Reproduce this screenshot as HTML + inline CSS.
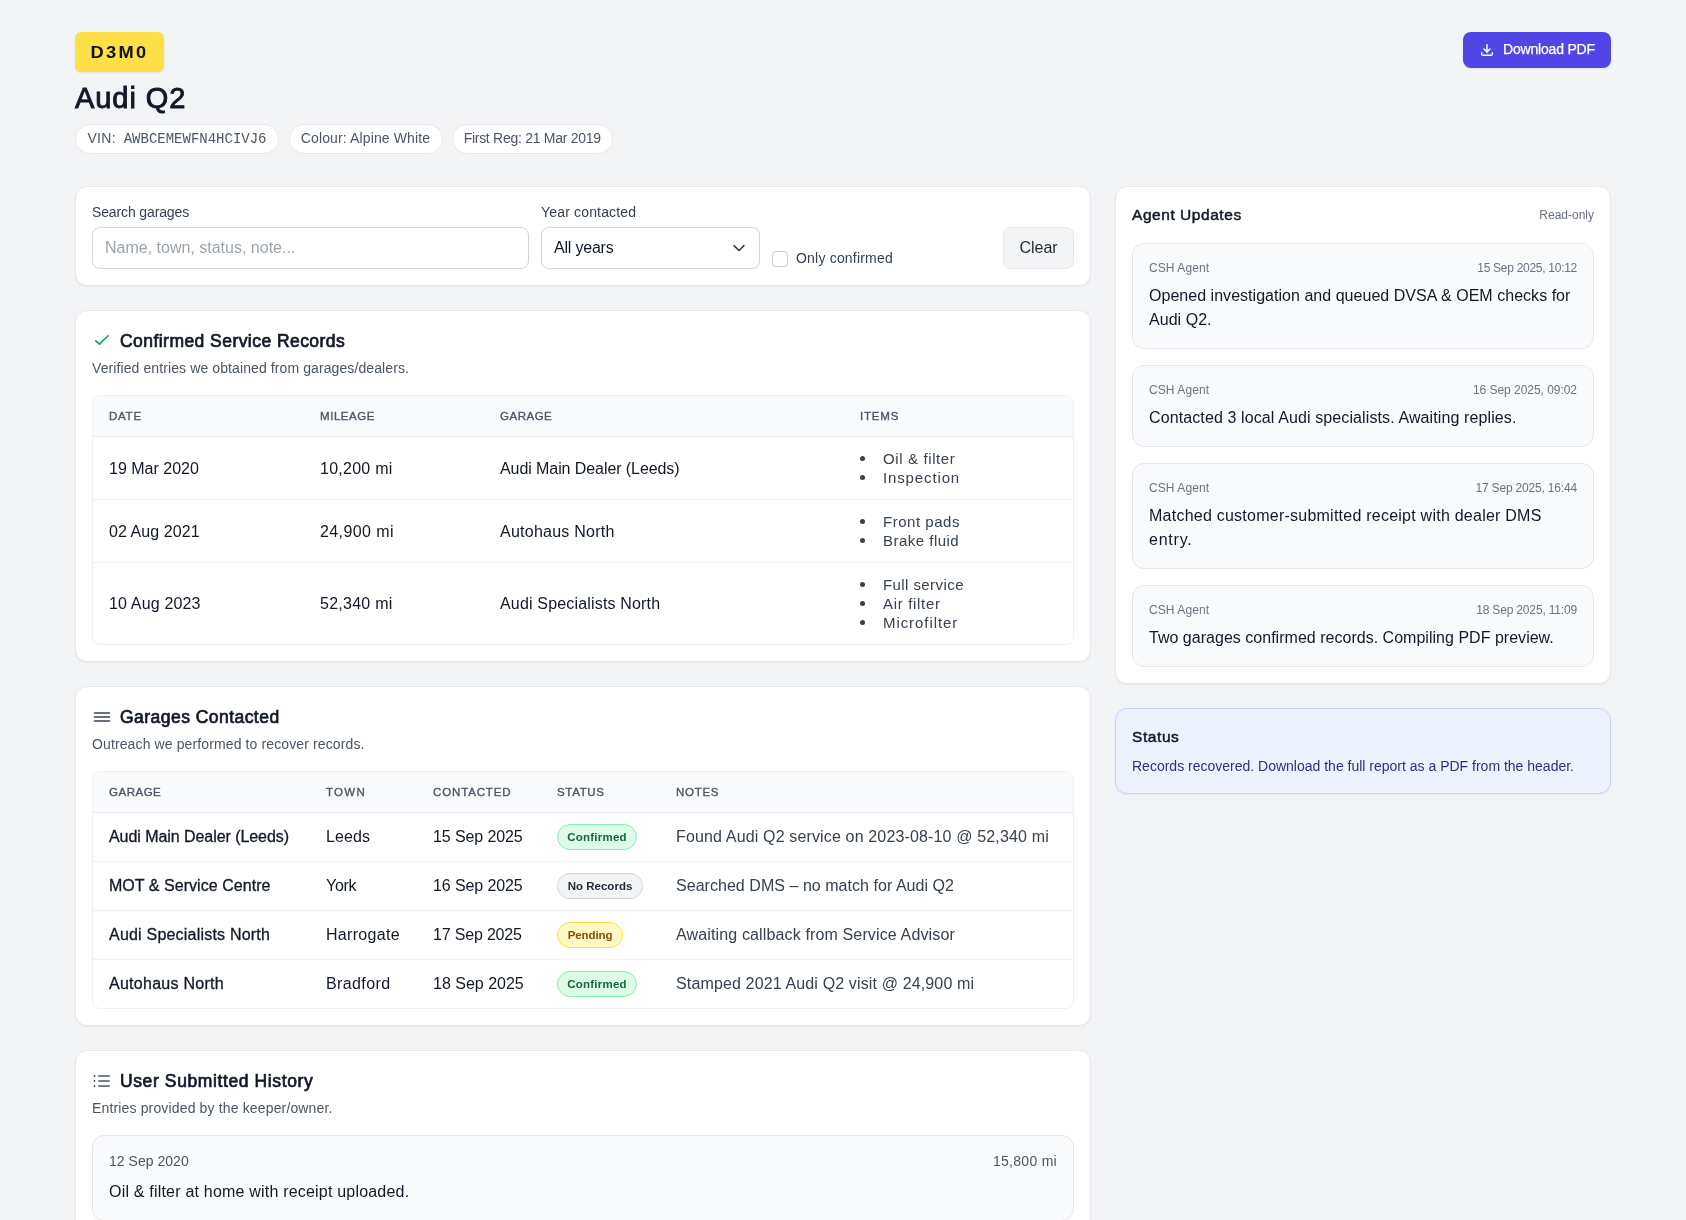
<!DOCTYPE html>
<html lang="en">
<head>
<meta charset="utf-8">
<title>Audi Q2 – Service History</title>
<style>
*{box-sizing:border-box;margin:0;padding:0}
html,body{width:1686px;height:1220px;overflow:hidden}
body{background:#f3f4f6;font-family:"Liberation Sans",sans-serif;color:#111827;font-size:16px;line-height:24px}
.t{white-space:nowrap}
.wrap{width:1536px;margin:0 auto;padding-top:32px;position:relative;will-change:transform}
.badge{display:block;height:40px;width:89px;background:#fde047;border-radius:6px;font-weight:700;font-size:16px;line-height:41px;text-align:center;color:#111;box-shadow:0 1px 2px rgba(0,0,0,.08)}
.badge .bt{display:inline-block;transform:scaleX(1.14);letter-spacing:2.1px;margin-right:-2px;position:relative;left:-1.200px}
h1{font-size:29px;line-height:36px;font-weight:400;-webkit-text-stroke:.9px #111827;margin-top:8px;color:#111827}
.pills{display:flex;margin-top:8px;height:30px}
.pill{height:30px;border:1px solid #e5e7eb;background:#fff;border-radius:15px;padding:4px 0;text-align:center;font-size:14px;line-height:20px;color:#4b5563;white-space:nowrap}
.p1{width:204px}.p2{width:154px;margin-left:9.500px}.p3{width:161.500px;margin-left:9px}
.pill .mono{font-family:"Liberation Mono",monospace;margin-left:4px}
.dl{position:absolute;right:0;top:32px;width:148px;height:36px;border-radius:8px;background:#4f46e5;color:#fff;font-size:14px;line-height:34px;padding-left:40px;box-shadow:0 1px 2px rgba(0,0,0,.08);-webkit-text-stroke:.25px #fff}
.dl svg{position:absolute;left:15.500px;top:10px}
.grid{display:grid;grid-template-columns:1016px 496px;gap:24px;margin-top:32px;align-items:start}
.card{background:#fff;border:1px solid #e5e7eb;border-radius:12px;padding:16px;box-shadow:0 1px 2px rgba(0,0,0,.05)}
.col>.card+.card{margin-top:24px}
.filter{display:grid;grid-template-columns:437px 219px 219px 71px;gap:12px;align-items:end;height:100px}
.lbl{display:block;font-size:14px;line-height:20px;color:#374151;margin-bottom:4px}
.inp{height:42px;border:1px solid #d1d5db;border-radius:8px;background:#fff;padding:8px 12px;font-size:16px;line-height:24px;position:relative}
.ph{color:#9ca3af}
.sel svg{position:absolute;right:13px;top:16px}
.f3{display:flex;align-items:center;gap:8px;height:20px;font-size:14px;line-height:20px;color:#374151}
.cb{width:16px;height:16px;border:1px solid #c9cdd4;border-radius:4px;background:#fff;display:inline-block}
.f4{height:42px;border:1px solid #e5e7eb;background:#f3f4f6;border-radius:8px;text-align:center;line-height:40px;font-size:16px;color:#1f2937}
h2{font-size:17.500px;line-height:28px;font-weight:400;-webkit-text-stroke:.7px #111827;color:#111827;position:relative;padding-left:28px}
h2 svg{position:absolute;left:0;top:4px}
.sub{font-size:14px;line-height:20px;color:#4b5563;margin-top:4px}
.tbl{margin-top:16px;border:1px solid #eef0f2;border-radius:8px;overflow:hidden}
.tr{display:grid;border-top:1px solid #f0f1f3;align-items:center;font-size:16px;line-height:24px;color:#111827}
.tr>div{padding:0 16px;white-space:nowrap}
.tr.th{border-top:0;background:#f9fafb;border-bottom:1px solid #e5e7eb;font-size:11.500px;line-height:16px;color:#4b5563;-webkit-text-stroke:.35px #4b5563;height:41px}
.th+.tr{border-top:0}
.t1 .tr{grid-template-columns:211px 180px 360px 229px}
.t2 .tr{grid-template-columns:217px 107px 124px 119px 413px}
ul{list-style:none;font-size:15px;line-height:19px;color:#374151;margin-left:-1px}
li{position:relative;padding-left:24px}
li:before{content:"";position:absolute;left:1px;top:7px;width:5px;height:5px;border-radius:50%;background:#374151}
.r2>div>.t{position:relative;top:1px}.r2{height:63px}.r3{height:82px}.th+.tr.r2{height:62px}
.t2 .tr:not(.th){height:49px}.t2 .th+.tr{height:48px !important}
.g{-webkit-text-stroke:.3px #111827}
.n{color:#374151}
.st{display:inline-block;height:26px;border-radius:13px;border:1px solid;padding:0;text-align:center;font-size:11.500px;line-height:24px;font-weight:700;vertical-align:middle}
.ok{background:#dcfce7;border-color:#86efac;color:#166534;width:80px}
.no{background:#f3f4f6;border-color:#d1d5db;color:#1f2937;width:86px}
.pe{background:#fef9c3;border-color:#fde047;color:#854d0e;width:66px}
.ent,.upd{border:1px solid #e5e7eb;background:#f9fafb;border-radius:12px;padding:16px}
.ent{margin-top:16px}
.row{display:flex;justify-content:space-between;color:#6b7280}
.ent .row{font-size:14px;line-height:20px;color:#4b5563}
.ent .msg{margin-top:8px}
.upd{margin-top:16px}
.upd .row{font-size:12px;line-height:16px}
.upd .msg{margin-top:8px;font-size:16px;line-height:24px;color:#111827;white-space:nowrap}
.auh{display:flex;justify-content:space-between;align-items:center;height:24px}
.auh .tt,#stt .tt{font-size:15.500px;line-height:24px;-webkit-text-stroke:.5px #111827;color:#111827}
.ro{font-size:12px;color:#6b7280}
#stt{background:#eef2ff;border-color:#c7d2fe}
#stt p{margin-top:8px;font-size:14px;line-height:20px;color:#312e81}
.lbl .t,.sub .t,.f3 .t,#stt p .t,.ent .row .t,.pill{position:relative;top:-1px}
.pill{top:0}.pill .t,.pill .mono{position:relative;top:-1px}
</style>
</head>
<body>
<div class="wrap">
  <div class="badge"><span class="bt">D3M0</span></div>
  <div class="dl"><svg width="16" height="16" viewBox="0 0 24 24" fill="none" stroke="#fff" stroke-width="2.2" stroke-linecap="round" stroke-linejoin="round"><path d="M12 4v11"/><path d="M7.500 10.500 12 15l4.500-4.500"/><path d="M4 16v2a2 2 0 0 0 2 2h12a2 2 0 0 0 2-2v-2"/></svg><span class="t" style="letter-spacing:-0.19px">Download PDF</span></div>
  <h1><span class="t" style="letter-spacing:0.93px">Audi Q2</span></h1>
  <div class="pills">
    <div class="pill p1"><span class="t" style="letter-spacing:0.27px">VIN:</span> <span class="mono">AWBCEMEWFN4HCIVJ6</span></div>
    <div class="pill p2"><span class="t" style="letter-spacing:0.13px">Colour: Alpine White</span></div>
    <div class="pill p3"><span class="t" style="letter-spacing:-0.27px">First Reg: 21 Mar 2019</span></div>
  </div>
  <div class="grid">
    <div class="col" id="left">
      <div class="card filter">
        <div class="f1"><label class="lbl"><span class="t" style="letter-spacing:-0.13px">Search garages</span></label><div class="inp"><span class="ph"><span class="t">Name, town, status, note...</span></span></div></div>
        <div class="f2"><label class="lbl"><span class="t" style="letter-spacing:0.17px">Year contacted</span></label><div class="inp sel"><span class="t" style="letter-spacing:-0.2px">All years</span><svg width="14" height="9" viewBox="0 0 14 9" fill="none" stroke="#374151" stroke-width="1.600" stroke-linecap="round" stroke-linejoin="round"><path d="M2.100 1.600 7 6.500l4.900-4.900"/></svg></div></div>
        <div class="f3"><span class="cb"></span><span class="t" style="letter-spacing:0.2px">Only confirmed</span></div>
        <div class="f4"><span class="t">Clear</span></div>
      </div>

      <div class="card sec" id="c2">
        <h2><svg width="20" height="20" viewBox="0 0 20 20" fill="none" stroke="#16a34a" stroke-width="1.600" stroke-linecap="round" stroke-linejoin="round"><path d="M3.800 9.800 7.500 13.100 16.100 4.700"/></svg><span class="t" style="letter-spacing:0.45px">Confirmed Service Records</span></h2>
        <p class="sub"><span class="t" style="letter-spacing:0.1px">Verified entries we obtained from garages/dealers.</span></p>
        <div class="tbl t1">
          <div class="tr th"><div><span class="t" style="letter-spacing:0.75px">DATE</span></div><div><span class="t" style="letter-spacing:0.56px">MILEAGE</span></div><div><span class="t" style="letter-spacing:0.51px">GARAGE</span></div><div><span class="t" style="letter-spacing:0.8px">ITEMS</span></div></div>
          <div class="tr r2"><div><span class="t">19 Mar 2020</span></div><div><span class="t" style="letter-spacing:0.26px">10,200 mi</span></div><div><span class="t" style="letter-spacing:-0.08px">Audi Main Dealer (Leeds)</span></div><div><ul><li><span class="t" style="letter-spacing:0.62px">Oil &amp; filter</span></li><li><span class="t" style="letter-spacing:0.87px">Inspection</span></li></ul></div></div>
          <div class="tr r2"><div><span class="t" style="letter-spacing:0.08px">02 Aug 2021</span></div><div><span class="t" style="letter-spacing:0.4px">24,900 mi</span></div><div><span class="t" style="letter-spacing:0.25px">Autohaus North</span></div><div><ul><li><span class="t" style="letter-spacing:0.52px">Front pads</span></li><li><span class="t" style="letter-spacing:0.48px">Brake fluid</span></li></ul></div></div>
          <div class="tr r3"><div><span class="t" style="letter-spacing:0.16px">10 Aug 2023</span></div><div><span class="t" style="letter-spacing:0.26px">52,340 mi</span></div><div><span class="t" style="letter-spacing:0.17px">Audi Specialists North</span></div><div><ul><li><span class="t" style="letter-spacing:0.42px">Full service</span></li><li><span class="t" style="letter-spacing:0.68px">Air filter</span></li><li><span class="t" style="letter-spacing:0.93px">Microfilter</span></li></ul></div></div>
        </div>
      </div>

      <div class="card sec" id="c3">
        <h2><svg width="20" height="20" viewBox="0 0 20 20" fill="none" stroke="#374151" stroke-width="1.600" stroke-linecap="round"><path d="M2.500 6h15M2.500 10h15M2.500 14h15"/></svg><span class="t" style="letter-spacing:0.46px">Garages Contacted</span></h2>
        <p class="sub"><span class="t" style="letter-spacing:0.12px">Outreach we performed to recover records.</span></p>
        <div class="tbl t2">
          <div class="tr th"><div><span class="t" style="letter-spacing:0.51px">GARAGE</span></div><div><span class="t" style="letter-spacing:1.28px">TOWN</span></div><div><span class="t" style="letter-spacing:0.86px">CONTACTED</span></div><div><span class="t" style="letter-spacing:0.67px">STATUS</span></div><div><span class="t" style="letter-spacing:0.72px">NOTES</span></div></div>
          <div class="tr"><div class="g"><span class="t" style="letter-spacing:-0.06px">Audi Main Dealer (Leeds)</span></div><div><span class="t" style="letter-spacing:0.08px">Leeds</span></div><div><span class="t" style="letter-spacing:-0.11px">15 Sep 2025</span></div><div><span class="st ok"><span class="t" style="letter-spacing:0.24px">Confirmed</span></span></div><div class="n"><span class="t" style="letter-spacing:0.15px">Found Audi Q2 service on 2023-08-10 @ 52,340 mi</span></div></div>
          <div class="tr"><div class="g"><span class="t" style="letter-spacing:0.04px">MOT &amp; Service Centre</span></div><div><span class="t" style="letter-spacing:-0.27px">York</span></div><div><span class="t" style="letter-spacing:-0.11px">16 Sep 2025</span></div><div><span class="st no"><span class="t" style="letter-spacing:0.02px">No Records</span></span></div><div class="n"><span class="t" style="letter-spacing:0.04px">Searched DMS – no match for Audi Q2</span></div></div>
          <div class="tr"><div class="g"><span class="t" style="letter-spacing:0.21px">Audi Specialists North</span></div><div><span class="t" style="letter-spacing:0.3px">Harrogate</span></div><div><span class="t" style="letter-spacing:-0.18px">17 Sep 2025</span></div><div><span class="st pe"><span class="t" style="letter-spacing:-0.11px">Pending</span></span></div><div class="n"><span class="t" style="letter-spacing:0.14px">Awaiting callback from Service Advisor</span></div></div>
          <div class="tr"><div class="g"><span class="t" style="letter-spacing:0.27px">Autohaus North</span></div><div><span class="t" style="letter-spacing:0.39px">Bradford</span></div><div><span class="t">18 Sep 2025</span></div><div><span class="st ok"><span class="t" style="letter-spacing:0.24px">Confirmed</span></span></div><div class="n"><span class="t" style="letter-spacing:0.14px">Stamped 2021 Audi Q2 visit @ 24,900 mi</span></div></div>
        </div>
      </div>

      <div class="card sec" id="c4">
        <h2><svg width="20" height="20" viewBox="0 0 20 20" fill="none" stroke="#4b5563" stroke-width="1.700" stroke-linecap="butt"><path d="M6.200 5h11.600M6.200 10h11.600M6.200 15h11.600"/><path stroke-width="2" d="M1.800 5h1.400M1.800 10h1.400M1.800 15h1.400"/></svg><span class="t" style="letter-spacing:0.61px">User Submitted History</span></h2>
        <p class="sub"><span class="t" style="letter-spacing:0.15px">Entries provided by the keeper/owner.</span></p>
        <div class="ent"><div class="row"><span class="t" style="letter-spacing:0.03px">12 Sep 2020</span><span class="t" style="letter-spacing:0.28px">15,800 mi</span></div><div class="msg"><span class="t" style="letter-spacing:0.2px">Oil &amp; filter at home with receipt uploaded.</span></div></div>
      </div>
    </div>
    <div class="col" id="right">
      <div class="card" id="au">
        <div class="auh"><span class="tt"><span class="t" style="letter-spacing:0.55px">Agent Updates</span></span><span class="ro"><span class="t">Read-only</span></span></div>
        <div class="upd"><div class="row"><span class="t" style="letter-spacing:0.08px">CSH Agent</span><span class="t" style="letter-spacing:-0.28px">15 Sep 2025, 10:12</span></div><div class="msg"><span class="t" style="letter-spacing:0.03px">Opened investigation and queued DVSA &amp; OEM checks for</span><br><span class="t" style="letter-spacing:0.04px">Audi Q2.</span></div></div>
        <div class="upd"><div class="row"><span class="t" style="letter-spacing:0.08px">CSH Agent</span><span class="t" style="letter-spacing:-0.04px">16 Sep 2025, 09:02</span></div><div class="msg"><span class="t" style="letter-spacing:0.11px">Contacted 3 local Audi specialists. Awaiting replies.</span></div></div>
        <div class="upd"><div class="row"><span class="t" style="letter-spacing:0.08px">CSH Agent</span><span class="t" style="letter-spacing:-0.18px">17 Sep 2025, 16:44</span></div><div class="msg"><span class="t" style="letter-spacing:0.24px">Matched customer-submitted receipt with dealer DMS</span><br><span class="t" style="letter-spacing:0.77px">entry.</span></div></div>
        <div class="upd"><div class="row"><span class="t" style="letter-spacing:0.08px">CSH Agent</span><span class="t" style="letter-spacing:-0.17px">18 Sep 2025, 11:09</span></div><div class="msg"><span class="t" style="letter-spacing:0.02px">Two garages confirmed records. Compiling PDF preview.</span></div></div>
      </div>
      <div class="card" id="stt">
        <div class="tt"><span class="t" style="letter-spacing:0.58px">Status</span></div>
        <p><span class="t">Records recovered. Download the full report as a PDF from the header.</span></p>
      </div>
    </div>
  </div>
</div>
</body>
</html>
